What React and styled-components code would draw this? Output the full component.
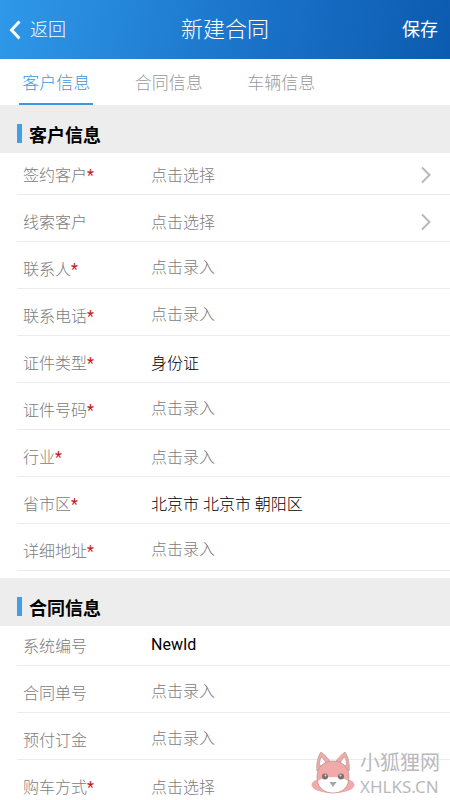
import React, { useState } from 'react';
import styled, { createGlobalStyle, ThemeProvider } from 'styled-components';

const theme = {
	blue: '#3b97de',
	text: '#000',
	muted: '#7c7c7c',
	tabGray: '#999',
	band: '#ededed',
	line: '#ebebeb',
	required: '#c8161d',
};

const GlobalStyle = createGlobalStyle`
	* {
		box-sizing: border-box;
	}

	body {
		margin: 0;
		background: #fff;
		font-family: Roboto, 'Noto Sans CJK SC', sans-serif;
	}

	button,
	input {
		margin: 0;
		padding: 0;
		border: 0;
		background: transparent;
		font: inherit;
		color: inherit;
	}
`;

const Page = styled.div`
	position: relative;
	height: 100vh;
	overflow-x: hidden;
	overflow-y: auto;
	scrollbar-width: none;
`;

const Header = styled.header`
	display: grid;
	grid-template-columns: 1fr auto 1fr;
	align-items: center;
	height: 59px;
	padding: 0 12px 0 9px;
	background: linear-gradient(100deg, #2f98e9 0%, #1b75cb 52%, #0c5bb0 100%);
	color: #fff;

	h1 {
		margin: 0;
		padding-left: 3px;
		font-size: 22px;
		font-weight: 300;
		line-height: 32px;
	}
`;

const HeaderButton = styled.button`
	display: flex;
	align-items: center;
	justify-self: ${(props) => (props.$end ? 'end' : 'start')};
	gap: 9px;
	font-size: 18px;
	line-height: 28px;
	font-weight: ${(props) => (props.$end ? 400 : 300)};
`;

const Tabs = styled.nav`
	display: flex;
	height: 46px;
`;

const Tab = styled.button`
	display: flex;
	flex-direction: column;
	align-items: center;
	justify-content: space-between;
	width: 25%;
	padding-top: 10px;
	font-size: 17px;
	font-weight: 300;
	line-height: 28px;
	color: ${(props) => (props.$active ? props.theme.blue : props.theme.tabGray)};

	&::after {
		content: '';
		width: 74px;
		height: 2px;
		background: ${(props) => (props.$active ? props.theme.blue : 'transparent')};
	}
`;

const SectionTitle = styled.h2`
	display: flex;
	align-items: flex-start;
	gap: 7px;
	height: 48px;
	margin: 0;
	padding: 19px 17px 0;
	background: ${(props) => props.theme.band};
	font-size: 18px;
	font-weight: 700;
	line-height: 24px;

	&::before {
		content: '';
		width: 5px;
		height: 19px;
		background: #419fe6;
	}
`;

const Fields = styled.div`
	display: flex;
	flex-direction: column;
	gap: 7px;
	padding: ${(props) => props.$top}px 0 7px 17px;
`;

const Row = styled.div`
	display: flex;
	align-items: center;
	height: 40px;
	padding: 3px 18px 0 6px;
	border-bottom: 1px solid ${(props) => props.theme.line};
	font-size: 16px;
	font-weight: 300;
	line-height: 24px;
`;

const Label = styled.label`
	width: 128px;
	color: ${(props) => props.theme.muted};

	span {
		color: ${(props) => props.theme.required};
		font-weight: 400;
	}
`;

const Picker = styled.button`
	display: flex;
	flex: 1;
	align-items: center;
	justify-content: space-between;
	text-align: left;
	color: ${(props) => (props.$filled ? props.theme.text : props.theme.muted)};

	svg {
		margin-bottom: 3px;
	}
`;

const TextInput = styled.input`
	flex: 1;
	min-width: 0;
	height: 24px;
	margin-bottom: 4px;
	outline: none;
	color: ${(props) => props.theme.text};
	font-weight: ${(props) => (props.defaultValue ? 400 : 300)};

	&::placeholder {
		color: ${(props) => props.theme.muted};
		opacity: 1;
	}
`;

const Watermark = styled.div`
	position: absolute;
	top: 749px;
	right: 10px;
	display: flex;
	align-items: center;
	gap: 5px;
	pointer-events: none;
	color: #b9b9bd;
	font-family: 'Noto Sans', 'Noto Sans CJK SC', sans-serif;

	p {
		margin: 0;
		font-size: 20px;
		line-height: 27px;
	}

	p + p {
		font-size: 17px;
		line-height: 21px;
	}
`;

const BackIcon = () => (
	<svg width="12" height="20" viewBox="0 0 12 20" fill="none" stroke="#fff" strokeWidth="3">
		<path d="M10.500 1.500L2.500 10l8 8.500" />
	</svg>
);

const Chevron = () => (
	<svg width="12" height="18" viewBox="0 0 12 18" fill="none" stroke="#b8b8b8" strokeWidth="2">
		<path d="M2 1.500L9.500 9 2 16.500" />
	</svg>
);

const Fox = () => (
	<svg width="44" height="44" viewBox="0 0 44 44">
		<ellipse cx="22" cy="34" rx="21.500" ry="8" fill="#f1aaa8" />
		<g stroke="#a99a98" strokeWidth="0.7">
			<path d="M6 20C5 13 7 5 10 1c4 3 8 7 10 11z" fill="#f1aaa8" />
			<path d="M38 20c1-7-1-15-4-19-4 3-8 7-10 11z" fill="#f1aaa8" />
			<path d="M9 15c-1-3 0-7 1.500-9 2 2 4 5 5 7z" fill="#fff" />
			<path d="M35 15c1-3 0-7-1.500-9-2 2-4 5-5 7z" fill="#fff" />
			<path d="M22 10c10 0 16 7 16 16s-6 16-16 16S6 35 6 26s6-16 16-16z" fill="#f1aaa8" />
		</g>
		<path d="M7 30c4-3 10-4 15-4s11 1 15 4c-1 7-7 11.500-15 11.500S8 37 7 30z" fill="#fff" />
		<circle cx="14" cy="25.500" r="3" fill="#77716d" />
		<circle cx="30" cy="25.500" r="3" fill="#77716d" />
		<circle cx="14.500" cy="24.500" r="1" fill="#ddd" />
		<circle cx="29.500" cy="24.500" r="1" fill="#ddd" />
		<path d="M18.500 31h7L22 36z" fill="#a6a2a8" />
	</svg>
);

const tabs = ['客户信息', '合同信息', '车辆信息'];

const customerFields = [
	{ id: 'customer', label: '签约客户', required: true, type: 'picker', arrow: true },
	{ id: 'lead', label: '线索客户', type: 'picker', arrow: true },
	{ id: 'contact', label: '联系人', required: true },
	{ id: 'phone', label: '联系电话', required: true },
	{ id: 'idType', label: '证件类型', required: true, type: 'picker', value: '身份证' },
	{ id: 'idNumber', label: '证件号码', required: true },
	{ id: 'industry', label: '行业', required: true, type: 'picker', hint: '点击录入' },
	{ id: 'region', label: '省市区', required: true, type: 'picker', value: '北京市 北京市 朝阳区' },
	{ id: 'address', label: '详细地址', required: true },
];

const contractFields = [
	{ id: 'systemNo', label: '系统编号', value: 'NewId' },
	{ id: 'contractNo', label: '合同单号' },
	{ id: 'deposit', label: '预付订金' },
	{ id: 'payment', label: '购车方式', required: true, type: 'picker' },
];

const Field = ({ id, label, required, type, arrow, value, hint }) => {
	return (
		<Row>
			<Label htmlFor={id}>
				{label}
				{required && <span>*</span>}
			</Label>
			{type === 'picker' ? (
				<Picker id={id} type="button" $filled={Boolean(value)}>
					{value || hint || '点击选择'}
					{arrow && <Chevron />}
				</Picker>
			) : (
				<TextInput id={id} type="text" placeholder="点击录入" defaultValue={value} />
			)}
		</Row>
	);
};

const App = () => {
	const [active, setActive] = useState(0);

	return (
		<ThemeProvider theme={theme}>
			<GlobalStyle />
			<Page>
				<Header>
					<HeaderButton type="button">
						<BackIcon />
						返回
					</HeaderButton>
					<h1>新建合同</h1>
					<HeaderButton type="button" $end>
						保存
					</HeaderButton>
				</Header>
				<Tabs>
					{tabs.map((tab, i) => (
						<Tab key={tab} type="button" $active={i === active} onClick={() => setActive(i)}>
							{tab}
						</Tab>
					))}
				</Tabs>
				<section>
					<SectionTitle>客户信息</SectionTitle>
					<Fields $top={2}>
						{customerFields.map((field) => (
							<Field key={field.id} {...field} />
						))}
					</Fields>
				</section>
				<section>
					<SectionTitle>合同信息</SectionTitle>
					<Fields $top={0}>
						{contractFields.map((field) => (
							<Field key={field.id} {...field} />
						))}
					</Fields>
				</section>
				<Watermark>
					<Fox />
					<div>
						<p>小狐狸网</p>
						<p>XHLKS.CN</p>
					</div>
				</Watermark>
			</Page>
		</ThemeProvider>
	);
};

export default App;
